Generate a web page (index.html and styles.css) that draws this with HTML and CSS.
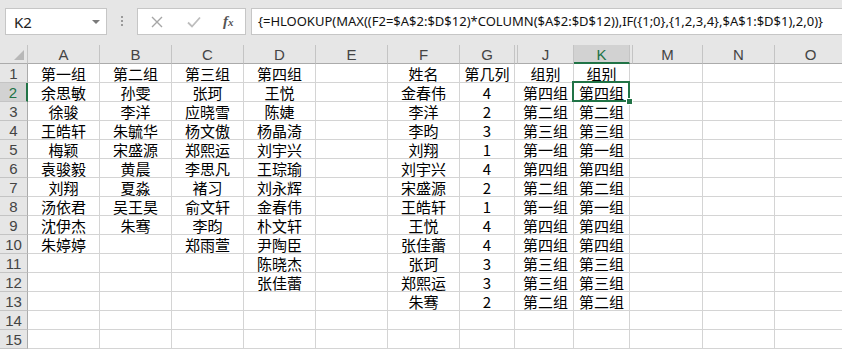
FILE: index.html
```html
<!DOCTYPE html>
<html lang="zh-CN">
<head>
    <meta charset="UTF-8">
    <meta name="viewport" content="width=device-width, initial-scale=1.0">
    <title>分组查询</title>
    <link rel="stylesheet" href="styles.css">
</head>
<body>

    <div class="formula-bar">
        <div class="name-box">
            <span>K2</span>
            <span class="arrow"></span>
        </div>
        <div class="grip"><i></i><i></i><i></i></div>
        <div class="fx-box">
            <svg class="btn-cancel" width="12" height="12" viewBox="0 0 12 12">
                <path d="M1 1 L11 11 M11 1 L1 11" stroke="#a6a6a6" stroke-width="1.4" fill="none"/>
            </svg>
            <svg class="btn-enter" width="14" height="12" viewBox="0 0 14 12">
                <path d="M1 6.5 L5 10.5 L13 1.5" stroke="#bdbdbd" stroke-width="1.8" fill="none"/>
            </svg>
            <span class="fx">f<sub>x</sub></span>
        </div>
        <div class="formula">{=HLOOKUP(MAX((F2=$A$2:$D$12)*COLUMN($A$2:$D$12)),IF({1;0},{1,2,3,4},$A$1:$D$1),2,0)}</div>
    </div>

    <div class="sheet" id="sheet"></div>

    <script>
        const columns = [
            { name: 'A' }, { name: 'B' }, { name: 'C' }, { name: 'D' },
            { name: 'E' }, { name: 'F' }, { name: 'G' },
            { name: '', hidden: true },
            { name: 'J' }, { name: 'K' },
            { name: '', hidden: true },
            { name: 'M' }, { name: 'N' }, { name: 'O' }
        ];

        const groups = ['第一组', '第二组', '第三组', '第四组'];
        const lookup = [4, 2, 3, 1, 4, 2, 1, 4, 4, 3, 3, 2];

        const data = {
            A: ['第一组', '余思敏', '徐骏', '王皓轩', '梅颖', '袁骏毅', '刘翔', '汤依君', '沈伊杰', '朱婷婷'],
            B: ['第二组', '孙雯', '李洋', '朱毓华', '宋盛源', '黄晨', '夏淼', '吴王昊', '朱骞'],
            C: ['第三组', '张珂', '应晓雪', '杨文傲', '郑熙运', '李思凡', '褚习', '俞文轩', '李昀', '郑雨萱'],
            D: ['第四组', '王悦', '陈婕', '杨晶渏', '刘宇兴', '王琮瑜', '刘永辉', '金春伟', '朴文轩', '尹陶臣', '陈晓杰', '张佳蕾'],
            F: ['姓名', '金春伟', '李洋', '李昀', '刘翔', '刘宇兴', '宋盛源', '王皓轩', '王悦', '张佳蕾', '张珂', '郑熙运', '朱骞'],
            G: ['第几列'].concat(lookup),
            J: ['组别'].concat(lookup.map(n => groups[n - 1])),
            K: ['组别'].concat(lookup.map(n => groups[n - 1]))
        };

        let html = '<div class="corner"></div>';
        columns.forEach(col => {
            let cls = 'ch' + (col.name === 'K' ? ' sel' : '') + (col.hidden ? ' hid' : '');
            html += `<div class="${cls}">${col.name}</div>`;
        });

        for (let r = 1; r <= 15; r++) {
            html += `<div class="rh${r === 2 ? ' sel' : ''}">${r}</div>`;
            columns.forEach(col => {
                let values = data[col.name] || [];
                let value = values[r - 1] !== undefined ? values[r - 1] : '';
                let cls = 'cell' + (col.hidden ? ' hid' : '') + (col.name === 'K' && r === 2 ? ' active' : '');
                html += `<div class="${cls}">${value}</div>`;
            });
        }

        document.getElementById('sheet').innerHTML = html;
    </script>

</body>
</html>
```

FILE: styles.css
```css
body {
    margin: 0;
    width: 842px;
    height: 349px;
    overflow: hidden;
    background-color: #ffffff;
    font-family: "Noto Sans CJK SC", sans-serif;
}

/* formula bar */

.formula-bar {
    display: flex;
    align-items: flex-start;
    height: 45px;
    padding: 8px 0 0 5px;
    box-sizing: border-box;
    background-color: #e6e6e6;
}

.name-box {
    display: flex;
    align-items: center;
    justify-content: space-between;
    width: 102px;
    height: 27px;
    padding: 0 6px 0 8px;
    box-sizing: border-box;
    background-color: #ffffff;
    border: 1px solid #c6c6c6;
    font-family: "Noto Sans", sans-serif;
    font-size: 15px;
    color: #222;
}

.arrow {
    width: 0;
    height: 0;
    border-left: 4px solid transparent;
    border-right: 4px solid transparent;
    border-top: 4px solid #7a7a7a;
}

.grip {
    display: flex;
    flex-direction: column;
    gap: 2px;
    width: 30px;
    padding-top: 8px;
    align-items: center;
}

.grip i {
    width: 2px;
    height: 2px;
    background-color: #9a9a9a;
}

.fx-box {
    display: flex;
    align-items: center;
    width: 109px;
    height: 27px;
    box-sizing: border-box;
    background-color: #ffffff;
    border: 1px solid #c6c6c6;
}

.btn-cancel {
    margin-left: 13px;
}

.btn-enter {
    margin-left: 24px;
}

.fx {
    margin-left: 22px;
    font-family: "Liberation Serif", serif;
    font-style: italic;
    font-weight: bold;
    font-size: 15px;
    color: #555;
}

.fx sub {
    font-size: 11px;
    vertical-align: 0;
}

.formula {
    flex: 1;
    height: 27px;
    margin-left: 5px;
    padding-left: 6px;
    box-sizing: border-box;
    background-color: #ffffff;
    border: 1px solid #c6c6c6;
    border-right: none;
    font-family: "Noto Sans", sans-serif;
    font-size: 13px;
    line-height: 25px;
    color: #111;
    white-space: nowrap;
}

/* worksheet grid */

.sheet {
    display: grid;
    grid-template-columns: 28px 72px 72px 72px 72px 72px 72px 55px 3px 56px 56px 3px 70px 72px 72px;
    grid-auto-rows: 19px;
    width: 848px;
}

.sheet > div {
    box-sizing: border-box;
    border-right: 1px solid #d4d4d4;
    border-bottom: 1px solid #d4d4d4;
    text-align: center;
    white-space: nowrap;
}

.corner,
.ch,
.rh {
    background-color: #e6e6e6;
    font-family: "Liberation Sans", sans-serif;
    color: #444;
}

.sheet > .corner,
.sheet > .ch {
    border-right-color: #c4c4c4;
    border-bottom-color: #ababab;
}

.sheet > .rh {
    border-right-color: #ababab;
    border-bottom-color: #c4c4c4;
}

.corner {
    position: relative;
}

.corner::after {
    content: "";
    position: absolute;
    right: 3px;
    bottom: 3px;
    width: 0;
    height: 0;
    border-left: 10px solid transparent;
    border-bottom: 10px solid #b8b8b8;
}

.ch {
    font-size: 15px;
    line-height: 19px;
}

.rh {
    font-size: 15px;
    line-height: 20px;
}

.sheet > .ch.sel {
    background-color: #d2d2d2;
    color: #217346;
    border-bottom: 2px solid #217346;
}

.sheet > .rh.sel {
    background-color: #d2d2d2;
    color: #217346;
    border-right: 2px solid #217346;
}

.cell {
    font-size: 15px;
    line-height: 20px;
    color: #000;
}

.sheet > .cell.hid {
    border-right: none;
}

.active {
    position: relative;
}

.active::before {
    content: "";
    position: absolute;
    left: -2px;
    top: -2px;
    right: -1px;
    bottom: -1px;
    border: 2px solid #217346;
}

.active::after {
    content: "";
    position: absolute;
    right: -4px;
    bottom: -4px;
    width: 5px;
    height: 5px;
    background-color: #217346;
    border: 1px solid #ffffff;
}
```
